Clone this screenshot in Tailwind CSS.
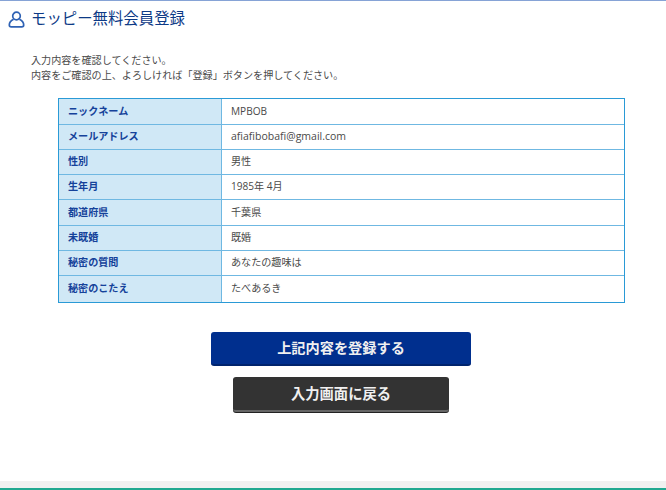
<!DOCTYPE html>
<html lang="ja">
<head>
    <meta charset="UTF-8">
    <title>モッピー無料会員登録</title>
    <script src="https://cdn.jsdelivr.net/npm/@tailwindcss/browser@4"></script>
</head>
<body class="h-[490px] w-[666px] overflow-hidden bg-white font-['Open_Sans','Noto_Sans_CJK_JP',sans-serif] text-[10.1px] text-[#4a4a4a]">
    <div class="flex h-[490px] flex-col border-t border-[#86a3d6]">
        <!-- 見出し -->
        <div class="flex h-[36px] items-center gap-[6px] pl-[8px]">
            <svg class="h-[17px] w-[17px]" viewBox="0 0 17 17" fill="none" stroke="#2f62b4" stroke-width="1.7">
                <circle cx="8.5" cy="5" r="3.8"/>
                <path d="M5.6 8.2 C3 9.5 1.3 11.5 1.3 14 C1.3 15.2 2 15.9 3.2 15.9 H13.8 C15 15.9 15.7 15.2 15.7 14 C15.7 11.5 14 9.5 11.4 8.2"/>
            </svg>
            <h1 class="text-[15.4px] text-[#0d3a86]">モッピー無料会員登録</h1>
        </div>

        <div class="mt-[16px] pl-[31px] leading-[15px]">
            <p>入力内容を確認してください。</p>
            <p>内容をご確認の上、よろしければ「登録」ボタンを押してください。</p>
        </div>

        <!-- 確認テーブル -->
        <table class="mt-[15px] ml-[58px] w-[567px] border-separate border-spacing-0 border border-[#2a9ad6]">
            <tbody>
                <tr class="h-[26px]"><th class="w-[163px] border-r border-b border-[#6fb8e2] bg-[#d0e8f6] pl-[9px] text-left font-bold text-[#15429a]">ニックネーム</th><td class="border-b border-[#6fb8e2] pl-[9px]">MPBOB</td></tr>
                <tr class="h-[25px]"><th class="border-r border-b border-[#6fb8e2] bg-[#d0e8f6] pl-[9px] text-left font-bold text-[#15429a]">メールアドレス</th><td class="border-b border-[#6fb8e2] pl-[9px] text-[10.5px]">afiafibobafi@gmail.com</td></tr>
                <tr class="h-[25px]"><th class="border-r border-b border-[#6fb8e2] bg-[#d0e8f6] pl-[9px] text-left font-bold text-[#15429a]">性別</th><td class="border-b border-[#6fb8e2] pl-[9px]">男性</td></tr>
                <tr class="h-[25px]"><th class="border-r border-b border-[#6fb8e2] bg-[#d0e8f6] pl-[9px] text-left font-bold text-[#15429a]">生年月</th><td class="border-b border-[#6fb8e2] pl-[9px]">1985年 4月</td></tr>
                <tr class="h-[26px]"><th class="border-r border-b border-[#6fb8e2] bg-[#d0e8f6] pl-[9px] text-left font-bold text-[#15429a]">都道府県</th><td class="border-b border-[#6fb8e2] pl-[9px]">千葉県</td></tr>
                <tr class="h-[25px]"><th class="border-r border-b border-[#6fb8e2] bg-[#d0e8f6] pl-[9px] text-left font-bold text-[#15429a]">未既婚</th><td class="border-b border-[#6fb8e2] pl-[9px]">既婚</td></tr>
                <tr class="h-[25px]"><th class="border-r border-b border-[#6fb8e2] bg-[#d0e8f6] pl-[9px] text-left font-bold text-[#15429a]">秘密の質問</th><td class="border-b border-[#6fb8e2] pl-[9px]">あなたの趣味は</td></tr>
                <tr class="h-[26px]"><th class="border-r border-[#6fb8e2] bg-[#d0e8f6] pl-[9px] text-left font-bold text-[#15429a]">秘密のこたえ</th><td class="pl-[9px]">たべあるき</td></tr>
            </tbody>
        </table>

        <!-- ボタン -->
        <div class="mt-[29px] flex flex-col items-center gap-[11px] pl-[16px]">
            <button class="h-[34px] w-[260px] rounded-[3px] border-b-2 border-[#00246e] bg-[#002f8e] text-[14.2px] font-bold text-[#f0f0f0]">上記内容を登録する</button>
            <button class="h-[35px] w-[216px] rounded-[3px] border-b-2 border-[#666] bg-[#333] text-[14.3px] font-bold text-[#f0f0f0] shadow-[0_1px_0_#222]">入力画面に戻る</button>
        </div>

        <div class="mt-auto h-[7px] bg-[#f0f0f0]"></div>
        <div class="h-[2px] bg-[#20a890]"></div>
    </div>
</body>
</html>
